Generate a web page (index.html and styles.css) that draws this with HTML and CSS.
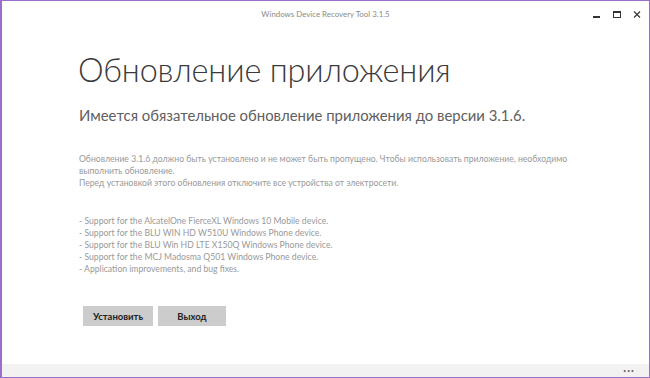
FILE: index.html
```html
<!DOCTYPE html>
<html lang="ru">
<head>
<meta charset="utf-8">
<title>Windows Device Recovery Tool</title>
<link rel="stylesheet" href="styles.css">
</head>
<body>
<div class="window">
  <div class="titlebar">
    <div class="title">Windows Device Recovery Tool 3.1.5</div>
    <div class="controls">
      <span class="ctl"><svg width="10" height="10" viewBox="0 0 10 10"><rect x="1" y="6" width="7" height="2" fill="#333"/></svg></span>
      <span class="ctl"><svg width="10" height="10" viewBox="0 0 10 10"><rect x="1.5" y="1.5" width="7" height="6" fill="none" stroke="#333" stroke-width="1"/><rect x="1" y="1" width="8" height="2" fill="#333"/></svg></span>
      <span class="ctl"><svg width="10" height="10" viewBox="0 0 10 10"><path d="M2 1.5 L8 7.5 M8 1.5 L2 7.5" stroke="#333" stroke-width="1.1"/></svg></span>
    </div>
  </div>
  <main class="content">
    <h1 class="heading">Обновление приложения</h1>
    <h2 class="subheading">Имеется обязательное обновление приложения до версии 3.1.6.</h2>
    <p class="info">Обновление 3.1.6 должно быть установлено и не может быть пропущено. Чтобы использовать приложение, необходимо выполнить обновление.<br>Перед установкой этого обновления отключите все устройства от электросети.</p>
    <p class="notes">- Support for the AlcatelOne FierceXL Windows 10 Mobile device.<br>- Support for the BLU WIN HD W510U Windows Phone device.<br>- Support for the BLU Win HD LTE X150Q Windows Phone device.<br>- Support for the MCJ Madosma Q501 Windows Phone device.<br>- Application improvements, and bug fixes.</p>
    <div class="buttons">
      <button class="btn">Установить</button>
      <button class="btn">Выход</button>
    </div>
  </main>
  <div class="appbar"><span class="dots">•••</span></div>
</div>
</body>
</html>
```
FILE: styles.css
```css
html, body { margin: 0; padding: 0; }
body { width: 650px; height: 378px; overflow: hidden; background: #fff; font-family: "Lato", "Open Sans", sans-serif; }
.window { box-sizing: border-box; width: 650px; height: 378px; border: 1px solid #9a6fcb; border-left-width: 2px; display: flex; flex-direction: column; background: #fff; }
.titlebar { height: 27px; position: relative; display: flex; align-items: center; justify-content: center; flex-shrink: 0; }
.title { font-size: 7.9px; color: #8a8a8a; margin-top: -2px; }
.controls { position: absolute; right: 6px; top: 9px; display: flex; gap: 9px; }
.ctl { width: 11px; height: 10px; display: flex; }
.content { flex: 1; padding: 0 0 0 76px; }
.heading { margin: 20px 0 0 0; font-size: 32.4px; font-weight: 300; color: #3a3a3a; line-height: 44px; letter-spacing: -0.15px; }
.subheading { margin: 12px 0 0 1px; font-size: 14.9px; font-weight: 400; color: #606060; line-height: 22px; }
.info { margin: 27px 0 0 1px; font-size: 8.65px; color: #999; line-height: 12px; width: 495px; }
.notes { margin: 26px 0 0 1px; font-size: 8.65px; color: #999; line-height: 12px; }
.buttons { display: flex; gap: 5px; margin: 31px 0 0 5px; }
.btn { width: 70px; height: 20px; border: none; background: #cccccc; font-family: "Lato", "Open Sans", sans-serif; font-size: 9.5px; font-weight: 700; color: #222; padding: 0; }
.btn + .btn { width: 68px; }
.appbar { height: 13px; background: #f2f2f2; display: flex; justify-content: flex-end; align-items: center; padding-right: 14px; flex-shrink: 0; }
.dots { font-size: 5px; color: #666; letter-spacing: 1px; }
```
